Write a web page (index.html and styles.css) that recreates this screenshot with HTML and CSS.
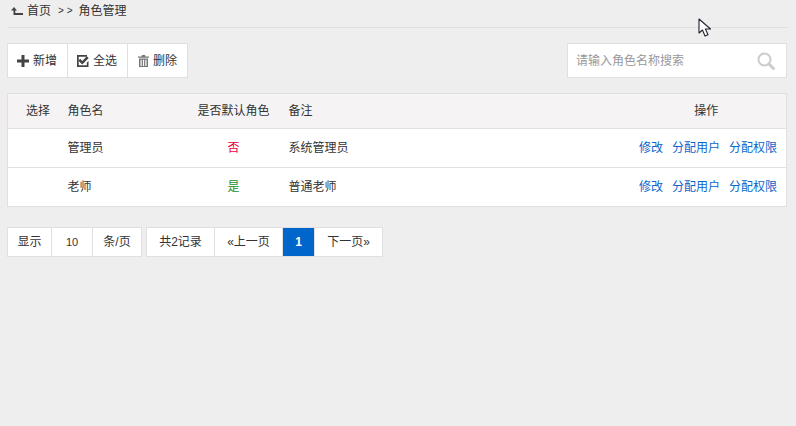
FILE: index.html
```html
<!DOCTYPE html>
<html lang="zh">
<head>
<meta charset="utf-8">
<title>角色管理</title>
<link rel="stylesheet" href="styles.css">
</head>
<body>
<nav class="crumb">
  <svg class="crumb-icon" width="12" height="8" viewBox="0 0 12 8"><path d="M0 3.500 3 0l3 3.500H4.300V6H12v2H2.500V3.500z" fill="#444"/></svg>
  <span>首页</span><span class="sep">&gt; &gt;</span><span>角色管理</span>
</nav>
<div class="toolbar">
  <div class="btns">
    <button class="btn"><svg width="12" height="12" viewBox="0 0 12 12"><path d="M4.500 0h3v4.500H12v3H7.500V12h-3V7.500H0v-3h4.500z" fill="#444"/></svg>新增</button>
    <button class="btn"><svg width="12" height="12" viewBox="0 0 12 12"><path d="M0 0h10v1.700H1.700v8.600h8.100V7.500L11.500 6v6H0z" fill="#444"/><path d="M3.200 3.800 5.300 5.900 9.800 1.200 11.700 3 5.300 9.500 1.400 5.700z" fill="#444"/></svg>全选</button>
    <button class="btn btn-last"><svg width="11" height="12" viewBox="0 0 11 12"><path d="M4 0h3l.6 1.500H11v1.300H0V1.500h3.400zM1 3.500h9V12H1zm1.500 1.200V11h1.200V4.700zm2.400 0V11h1.200V4.700zm2.400 0V11h1.200V4.700z" fill="#777"/></svg>删除</button>
  </div>
  <div class="search">
    <span class="placeholder">请输入角色名称搜索</span>
    <svg width="18" height="18" viewBox="0 0 18 18"><circle cx="7.500" cy="7.500" r="6" fill="none" stroke="#ccc" stroke-width="2"/><path d="m12 12 4.500 4.500" stroke="#ccc" stroke-width="3" stroke-linecap="round"/></svg>
  </div>
</div>
<table class="grid">
  <thead>
    <tr><th class="c-sel">选择</th><th class="c-name">角色名</th><th class="c-def">是否默认角色</th><th class="c-note">备注</th><th class="c-ops">操作</th></tr>
  </thead>
  <tbody>
    <tr><td></td><td>管理员</td><td class="c-def no">否</td><td>系统管理员</td><td class="links"><a>修改</a><a>分配用户</a><a>分配权限</a></td></tr>
    <tr><td></td><td>老师</td><td class="c-def yes">是</td><td>普通老师</td><td class="links"><a>修改</a><a>分配用户</a><a>分配权限</a></td></tr>
  </tbody>
</table>
<div class="pager">
  <div class="group">
    <span class="cell w-show">显示</span><span class="cell w-num">10</span><span class="cell w-unit">条/页</span>
  </div>
  <div class="group">
    <span class="cell w-total">共2记录</span><span class="cell w-prev">«上一页</span><span class="cell w-cur">1</span><span class="cell w-next">下一页»</span>
  </div>
</div>
<svg class="cursor" width="14" height="20" viewBox="0 0 14 20"><path d="M1 1v14l3.500-3 2.500 6 3-1.300-2.600-5.700H12.500z" fill="#fff" stroke="#223" stroke-width="1.100" stroke-linejoin="round"/></svg>
</body>
</html>
```
FILE: styles.css
```css
* { box-sizing: border-box; }
html, body { margin: 0; height: 100%; }
body {
  background: #eeeeee;
  color: #333;
  font: 12px/18px "Liberation Sans", "Noto Sans CJK SC", sans-serif;
  padding: 0 9px 0 7px;
  position: relative;
  overflow: hidden;
}
.crumb {
  height: 28px;
  margin: 0 -1px 0 1px;
  padding: 2px 0 0 3px;
  border-bottom: 1px solid #e0e0e0;
  display: flex;
  align-items: flex-start;
}
.crumb-icon { margin: 5px 4px 0 0; }
.crumb .sep { margin: 0 6px 0 7px; font-size: 10px; }
.toolbar {
  margin-top: 15px;
  display: flex;
  justify-content: space-between;
  height: 35px;
}
.btns {
  display: flex;
  background: #fff;
  border: 1px solid #e0e0e0;
}
.btn {
  width: 60px;
  padding: 0 1px 0 0;
  border: 0;
  border-right: 1px solid #e0e0e0;
  background: none;
  font: inherit;
  color: inherit;
  display: flex;
  align-items: center;
  justify-content: center;
  gap: 4px;
}
.btn-last { width: 59px; padding: 0; border-right: 0; }
.search {
  width: 220px;
  background: #fff;
  border: 1px solid #e0e0e0;
  display: flex;
  align-items: center;
  justify-content: space-between;
  padding: 0 11px 0 8px;
}
.placeholder { color: #999; padding-top: 1px; }
.grid {
  width: 780px;
  margin-top: 15px;
  border-collapse: collapse;
  table-layout: fixed;
  background: #fff;
  border: 1px solid #e0e0e0;
}
.grid th {
  height: 35px;
  background: #f5f3f3;
  font-weight: normal;
  text-align: left;
  padding: 0;
  border-bottom: 1px solid #e0e0e0;
}
.grid td {
  height: 39px;
  padding: 0;
  border-bottom: 1px solid #e0e0e0;
}
.c-sel { width: 60px; padding-left: 18px !important; }
.c-name { width: 111px; }
.c-def { width: 110px; text-align: center !important; }
.c-note { width: 340px; }
.c-ops { text-align: center !important; padding-right: 2px !important; }
.no { color: #e6003c; }
.yes { color: #1a8f2a; }
.links { text-align: right; padding-right: 9px !important; }
.links a { color: #0a66cc; margin-left: 9px; }
.pager {
  margin-top: 20px;
  display: flex;
  gap: 4px;
}
.group {
  display: flex;
  background: #fff;
  border: 1px solid #e0e0e0;
  height: 30px;
}
.cell {
  display: flex;
  align-items: center;
  justify-content: center;
  border-right: 1px solid #e0e0e0;
}
.cell:last-child { border-right: 0; }
.w-show { width: 44px; }
.w-num { width: 41px; font-size: 11px; }
.w-unit { width: 48px; }
.w-total { width: 68px; }
.w-prev { width: 68px; }
.w-cur { width: 32px; background: #0066cc; color: #fff; font-weight: bold; }
.w-next { width: 67px; }
.cursor { position: absolute; left: 698px; top: 18px; }
```
